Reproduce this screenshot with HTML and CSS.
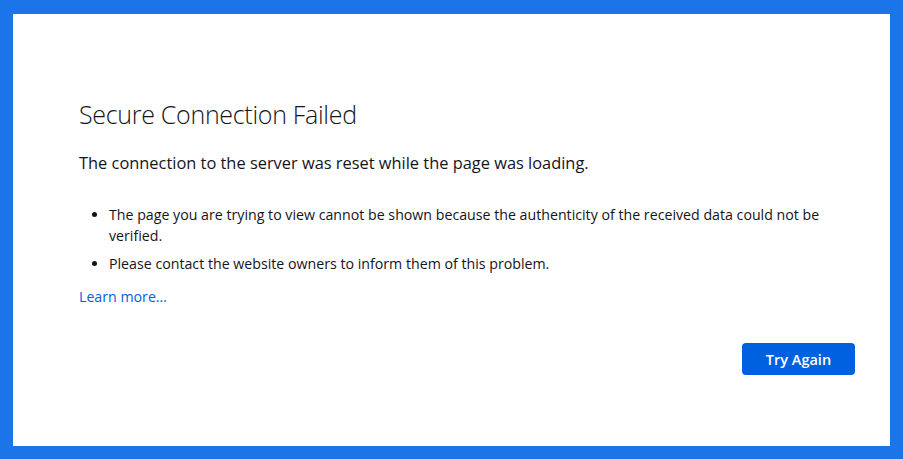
FILE: index.html
```html
<!DOCTYPE html>
<html lang="en">
<head>
<meta charset="utf-8">
<title>Secure Connection Failed</title>
<link rel="stylesheet" href="styles.css">
</head>
<body>
<div class="frame">
  <main class="panel">
    <div class="content">
      <h1 class="title">Secure Connection Failed</h1>
      <p class="short-desc">The connection to the server was reset while the page was loading.</p>
      <ul class="details">
        <li>The page you are trying to view cannot be shown because the authenticity of the received data could not be verified.</li>
        <li>Please contact the website owners to inform them of this problem.</li>
      </ul>
      <a class="learn-more" href="#">Learn more…</a>
      <div class="actions">
        <button class="primary">Try Again</button>
      </div>
    </div>
  </main>
</div>
</body>
</html>
```

FILE: styles.css
```css
html, body {
  margin: 0;
  padding: 0;
  height: 100%;
}
body {
  font-family: "Open Sans", "Noto Sans", sans-serif;
  color: #15141a;
  background: #1b74e8;
}
.frame {
  box-sizing: border-box;
  height: 100%;
  padding: 14px 13px 13px 13px;
  display: flex;
}
.panel {
  flex: 1;
  background: #ffffff;
  padding: 0 35px 0 66px;
}
.content {
  padding-top: 83px;
}
.title {
  margin: 0;
  font-size: 25px;
  font-weight: 300;
  line-height: 34px;
  letter-spacing: -0.3px;
}
.short-desc {
  margin: 20px 0 0 0;
  font-size: 16.4px;
  line-height: 24px;
}
.details {
  margin: 29px 0 0 0;
  padding-left: 30px;
  font-size: 14.2px;
  line-height: 21px;
}
.details li {
  margin-bottom: 7px;
}
.learn-more {
  display: inline-block;
  margin-top: 5px;
  font-size: 14.2px;
  line-height: 21px;
  color: #0061e0;
  text-decoration: none;
}
.actions {
  display: flex;
  justify-content: flex-end;
  margin-top: 36px;
}
.primary {
  width: 113px;
  height: 32px;
  border: none;
  border-radius: 4px;
  background: #0061e0;
  color: #ffffff;
  font-family: inherit;
  font-size: 14.5px;
  font-weight: 600;
}
```
